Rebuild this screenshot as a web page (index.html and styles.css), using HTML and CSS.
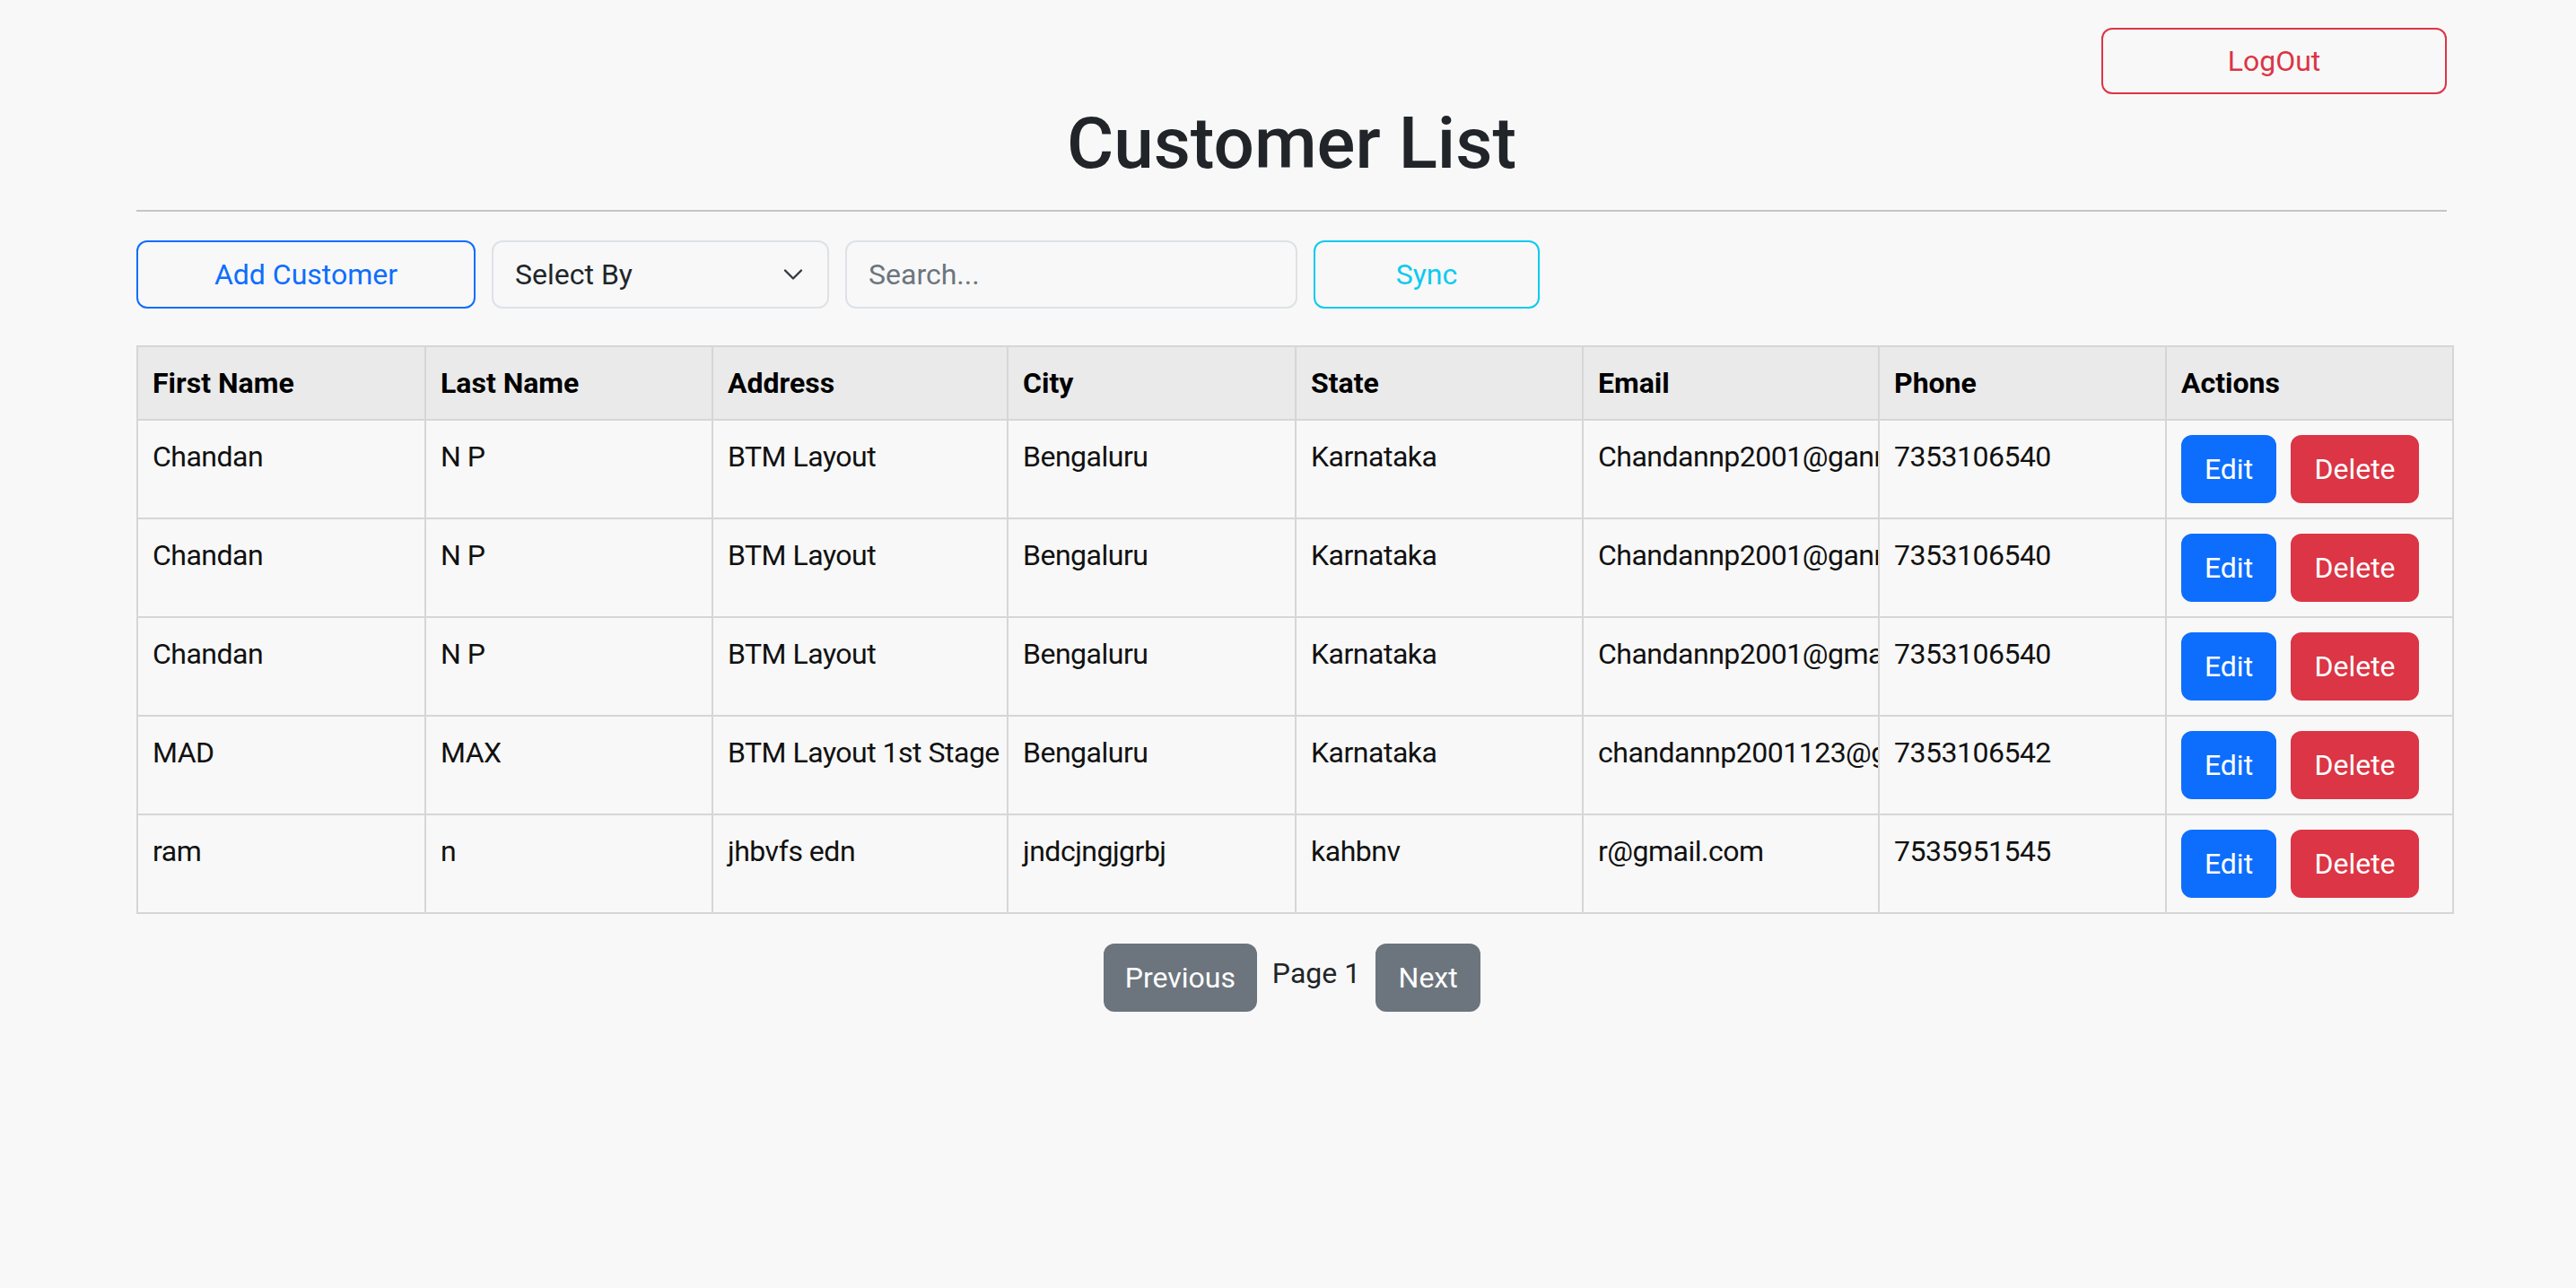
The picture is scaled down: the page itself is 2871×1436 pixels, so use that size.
FILE: index.html
```html
<!DOCTYPE html>
<html lang="en">
<head>
<meta charset="utf-8">
<title>Customer List</title>
<link rel="stylesheet" href="styles.css">
</head>
<body>
<div class="page">
  <div class="topbar">
    <button class="btn btn-outline-danger logout">LogOut</button>
  </div>
  <h1 class="title">Customer List</h1>
  <hr class="rule">
  <div class="toolbar">
    <button class="btn btn-outline-primary add">Add Customer</button>
    <div class="select">
      <span>Select By</span>
      <svg class="chevron" width="24" height="24" viewBox="0 0 16 16"><path d="m2 5 6 6 6-6" fill="none" stroke="#343a40" stroke-width="1.6" stroke-linecap="round" stroke-linejoin="round"/></svg>
    </div>
    <input class="search" type="text" placeholder="Search...">
    <button class="btn btn-outline-info sync">Sync</button>
  </div>

  <table class="grid">
    <colgroup>
      <col class="c1"><col class="c2"><col class="c3"><col class="c4"><col class="c5"><col class="c6"><col class="c7"><col class="c8">
    </colgroup>
    <thead>
      <tr>
        <th>First Name</th><th>Last Name</th><th>Address</th><th>City</th><th>State</th><th>Email</th><th>Phone</th><th>Actions</th>
      </tr>
    </thead>
    <tbody>
      <tr>
        <td>Chandan</td><td>N P</td><td>BTM Layout</td><td>Bengaluru</td><td>Karnataka</td><td>Chandannp2001@ganmail.com</td><td>7353106540</td>
        <td><div class="actions"><button class="btn btn-primary edit">Edit</button><button class="btn btn-danger del">Delete</button></div></td>
      </tr>
      <tr>
        <td>Chandan</td><td>N P</td><td>BTM Layout</td><td>Bengaluru</td><td>Karnataka</td><td>Chandannp2001@ganmail.com</td><td>7353106540</td>
        <td><div class="actions"><button class="btn btn-primary edit">Edit</button><button class="btn btn-danger del">Delete</button></div></td>
      </tr>
      <tr>
        <td>Chandan</td><td>N P</td><td>BTM Layout</td><td>Bengaluru</td><td>Karnataka</td><td>Chandannp2001@gmail.com</td><td>7353106540</td>
        <td><div class="actions"><button class="btn btn-primary edit">Edit</button><button class="btn btn-danger del">Delete</button></div></td>
      </tr>
      <tr>
        <td>MAD</td><td>MAX</td><td>BTM Layout 1st Stage</td><td>Bengaluru</td><td>Karnataka</td><td>chandannp2001123@gmail.com</td><td>7353106542</td>
        <td><div class="actions"><button class="btn btn-primary edit">Edit</button><button class="btn btn-danger del">Delete</button></div></td>
      </tr>
      <tr>
        <td>ram</td><td>n</td><td>jhbvfs edn</td><td>jndcjngjgrbj</td><td>kahbnv</td><td>r@gmail.com</td><td>7535951545</td>
        <td><div class="actions"><button class="btn btn-primary edit">Edit</button><button class="btn btn-danger del">Delete</button></div></td>
      </tr>
    </tbody>
  </table>

  <div class="pager">
    <button class="btn btn-secondary prev">Previous</button>
    <span class="page-label">Page 1</span>
    <button class="btn btn-secondary next">Next</button>
  </div>
</div>
</body>
</html>
```

FILE: styles.css
```css
* { box-sizing: border-box; }

html, body {
  margin: 0;
  padding: 0;
  background: #f8f8f8;
}

body {
  font-family: "Segoe UI", Roboto, "Noto Sans", "Liberation Sans", sans-serif;
  font-size: 32px;
  line-height: 48px;
  color: #212529;
}

.page {
  width: 2575px;
  margin-left: 152px;
}

.topbar {
  display: flex;
  justify-content: flex-end;
  padding-top: 31px;
}

.btn {
  font-family: inherit;
  font-size: 32px;
  line-height: 48px;
  padding: 12px 24px;
  border: 2px solid transparent;
  border-radius: 12px;
  background: transparent;
  text-align: center;
  cursor: pointer;
  white-space: nowrap;
}

.btn-outline-danger { color: #dc3545; border-color: #dc3545; }
.btn-outline-primary { color: #0d6efd; border-color: #0d6efd; }
.btn-outline-info { color: #0dcaf0; border-color: #0dcaf0; }
.btn-primary { color: #fff; background: #0d6efd; border-color: #0d6efd; }
.btn-danger { color: #fff; background: #dc3545; border-color: #dc3545; }
.btn-secondary { color: #fff; background: #6c757d; border-color: #6c757d; }

.logout {
  width: 385px;
  height: 74px;
  padding: 11px 24px;
}

.title {
  margin: 7px 0 0;
  font-size: 80px;
  line-height: 96px;
  font-weight: 500;
  text-align: center;
  color: #212529;
}

.rule {
  margin: 26px 0 32px;
  height: 0;
  border: 0;
  border-top: 2px solid #c4c5c6;
}

.toolbar {
  display: flex;
  gap: 18px;
  height: 76px;
}

.add { width: 378px; height: 76px; }
.sync { width: 252px; height: 76px; }

.select {
  width: 376px;
  height: 76px;
  border: 2px solid #dee2e6;
  border-radius: 12px;
  padding: 0 26px 0 24px;
  display: flex;
  align-items: center;
  justify-content: space-between;
  color: #212529;
}

.chevron { display: block; }

.search {
  width: 504px;
  height: 76px;
  border: 2px solid #dee2e6;
  border-radius: 12px;
  padding: 0 24px;
  background: transparent;
  font-family: inherit;
  font-size: 32px;
  color: #212529;
  outline: none;
}

.search::placeholder { color: #6c757d; opacity: 1; }

.grid {
  margin-top: 41px;
  width: 2581px;
  table-layout: fixed;
  border-collapse: collapse;
  border: 2px solid #d6d6d6;
}

.c1 { width: 321px; }
.c2 { width: 320px; }
.c3 { width: 329px; }
.c4 { width: 321px; }
.c5 { width: 320px; }
.c6 { width: 330px; }
.c7 { width: 320px; }
.c8 { width: 320px; }

.grid th,
.grid td {
  border: 2px solid #d6d6d6;
  padding: 16px 16px;
  text-align: left;
  vertical-align: top;
  white-space: nowrap;
  overflow: hidden;
}

.grid th {
  background: #eaeaea;
  font-weight: 700;
  color: #000;
}

.grid td {
  background: #f8f8f8;
  color: #111;
  letter-spacing: -0.5px;
}

.actions {
  display: flex;
  gap: 16px;
  letter-spacing: 0;
}

.edit { width: 106px; height: 76px; padding: 12px 0; }
.del { width: 143px; height: 76px; padding: 12px 0; }

.pager {
  margin-top: 33px;
  display: flex;
  justify-content: center;
  align-items: center;
  padding-left: 1px;
}

.prev { width: 171px; height: 76px; padding: 12px 0; }
.next { width: 117px; height: 76px; padding: 12px 0; }

.page-label {
  margin: 0 17px 10px;
  white-space: nowrap;
  color: #212529;
}
```
